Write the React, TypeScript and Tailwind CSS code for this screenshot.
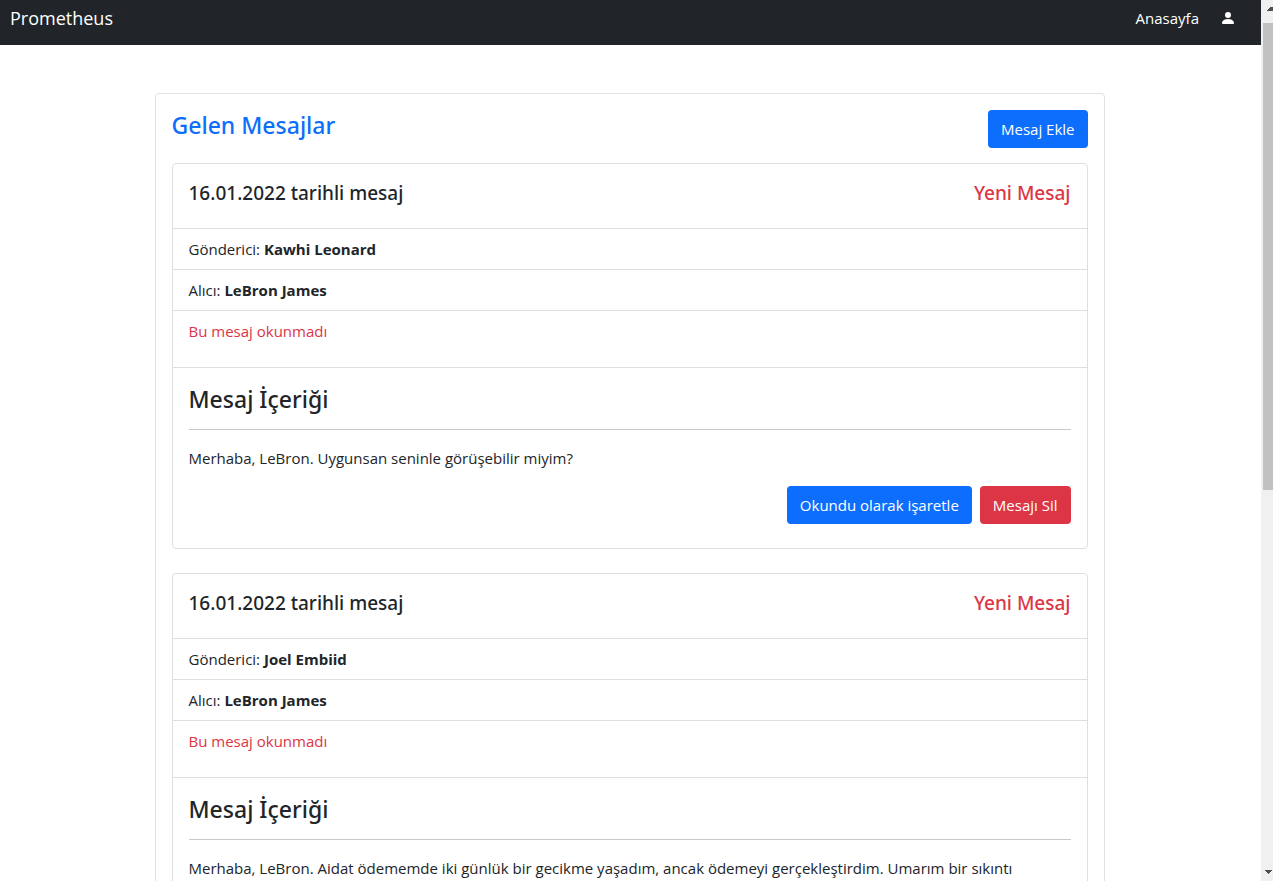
import React from "react";
import { BsPersonFill } from "react-icons/bs";

type Message = {
  id: number;
  date: string;
  sender: string;
  receiver: string;
  body: string;
};

const messages: Message[] = [
  {
    id: 1,
    date: "16.01.2022",
    sender: "Kawhi Leonard",
    receiver: "LeBron James",
    body: "Merhaba, LeBron. Uygunsan seninle görüşebilir miyim?",
  },
  {
    id: 2,
    date: "16.01.2022",
    sender: "Joel Embiid",
    receiver: "LeBron James",
    body: "Merhaba, LeBron. Aidat ödememde iki günlük bir gecikme yaşadım, ancak ödemeyi gerçekleştirdim. Umarım bir sıkıntı",
  },
];

function Navbar() {
  return (
    <nav className="flex h-[45px] shrink-0 items-start justify-between bg-[#212529] pt-1.5 pr-[25px] pl-2.5 text-white">
      <a href="#" className="text-[18px] leading-6">
        Prometheus
      </a>
      <div className="flex items-center gap-[21px]">
        <a href="#" className="leading-6">
          Anasayfa
        </a>
        <a href="#" aria-label="Profil">
          <BsPersonFill className="size-4" />
        </a>
      </div>
    </nav>
  );
}

function ActionButton({ danger = false, children }: { danger?: boolean; children: React.ReactNode }) {
  return (
    <button
      type="button"
      className={
        danger
          ? "h-[38px] rounded bg-[#dc3545] px-[13px] leading-6 text-white"
          : "h-[38px] rounded bg-[#0d6efd] px-[13px] leading-6 text-white"
      }
    >
      {children}
    </button>
  );
}

function MessageCard({ message }: { message: Message }) {
  return (
    <article className="mb-6 divide-y divide-[#dfdfdf] rounded border border-[#dfdfdf]">
      <header className="flex justify-between px-4 pt-4 pb-[22px] font-['Noto_Sans','Open_Sans',sans-serif] text-[19px] leading-[26px] font-medium">
        <h2>{message.date} tarihli mesaj</h2>
        <span className="text-[#dc3545]">Yeni Mesaj</span>
      </header>
      <p className="px-4 py-2">
        Gönderici: <strong className="font-bold">{message.sender}</strong>
      </p>
      <p className="px-4 py-2">
        Alıcı: <strong className="font-bold">{message.receiver}</strong>
      </p>
      <p className="px-4 pt-2 pb-6 text-[#dc3545]">Bu mesaj okunmadı</p>
      <div className="px-4 pt-4 pb-6">
        <h3 className="font-['Noto_Sans','Open_Sans',sans-serif] text-[23px] leading-[31px] font-medium">
          Mesaj İçeriği
        </h3>
        <hr className="mt-3.5 mb-4 border-[#c8c9ca]" />
        <p>{message.body}</p>
        <div className="mt-4 flex justify-end gap-2">
          <ActionButton>Okundu olarak işaretle</ActionButton>
          <ActionButton danger>Mesajı Sil</ActionButton>
        </div>
      </div>
    </article>
  );
}

function ScrollTrack() {
  return (
    <div aria-hidden="true" className="flex w-3 shrink-0 flex-col overflow-hidden bg-[#f0f0f0] pl-0.5">
      <svg viewBox="0 0 10 23" className="h-[23px] w-2.5 shrink-0" shapeRendering="crispEdges">
        <path d="M3 11h7V7H7v1H6v1H5v1H4z" fill="#505050" />
      </svg>
      <div className="h-[53%] bg-[#c1c1c1]" />
      <svg viewBox="0 0 10 14" className="mt-auto h-3.5 w-2.5 shrink-0" shapeRendering="crispEdges">
        <path d="M2 3h7v1H8v1H7v1H6v1H5V6H4V5H3V4H2z" fill="#505050" />
      </svg>
    </div>
  );
}

export default function App() {
  return (
    <div className="flex h-screen overflow-hidden bg-white font-['Open_Sans','Noto_Sans',sans-serif] text-[15px] leading-6 text-[#212529]">
      <div className="min-w-0 flex-1 overflow-hidden">
        <Navbar />
        <main className="pt-12 pr-[18px] pl-4">
          <section className="mx-auto max-w-[950px] rounded border border-[#dee2e6] p-4">
            <div className="mb-[15px] flex items-start justify-between">
              <h1 className="font-['Noto_Sans','Open_Sans',sans-serif] text-[23px] leading-[31px] font-medium text-[#0d6efd]">
                Gelen Mesajlar
              </h1>
              <ActionButton>Mesaj Ekle</ActionButton>
            </div>
            {messages.map((message) => (
              <MessageCard key={message.id} message={message} />
            ))}
          </section>
        </main>
      </div>
      <ScrollTrack />
    </div>
  );
}
